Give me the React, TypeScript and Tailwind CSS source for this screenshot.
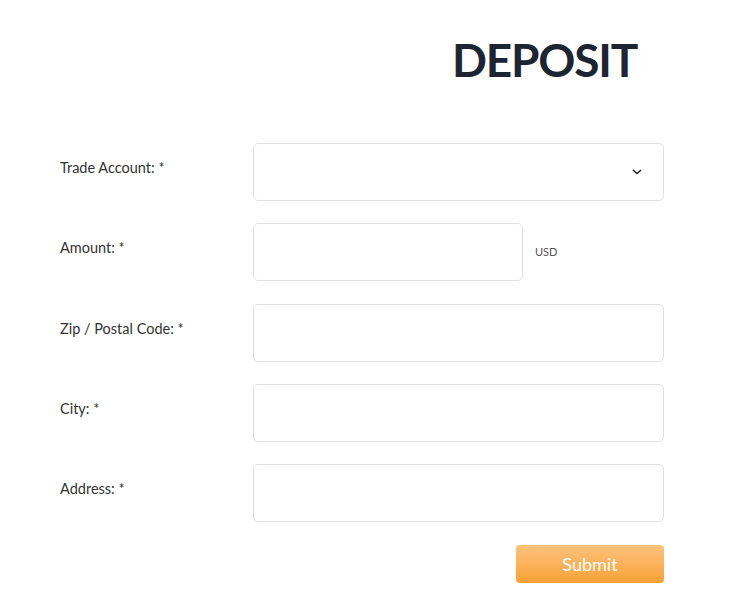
const fields = [
  { label: "Trade Account: *", kind: "select" },
  { label: "Amount: *", kind: "amount" },
  { label: "Zip / Postal Code: *", kind: "text" },
  { label: "City: *", kind: "text" },
  { label: "Address: *", kind: "text" },
];

function Chevron() {
  return (
    <svg width="10" height="6" viewBox="0 0 10 6" fill="none">
      <path d="M1 1l4 3.5L9 1" stroke="#222" strokeWidth="1.6" />
    </svg>
  );
}

export default function App() {
  return (
    <div className="min-h-[614px] w-[754px] bg-white font-['Lato',sans-serif] text-[#333]">
      <div className="pl-[452px] pt-[33px]">
        <h1 className="text-[46px] font-bold leading-[54px] tracking-[-1.2px] text-[#1d2532]">DEPOSIT</h1>
      </div>

      <form className="mt-[56px] flex w-[664px] flex-col gap-[22.3px] pl-[60px]">
        {fields.map((f) => (
          <div key={f.label} className="flex">
            <label className="w-[193px] pt-[15px] text-[14.5px] leading-[20px] text-[#333]">{f.label}</label>
            {f.kind === "select" && (
              <div className="flex h-[58px] w-[411px] items-center justify-end rounded-[5px] border border-[#e0e0e0] pr-[21px]">
                <Chevron />
              </div>
            )}
            {f.kind === "amount" && (
              <div className="flex items-center">
                <div className="h-[58px] w-[270px] rounded-[5px] border border-[#e0e0e0]" />
                <span className="ml-[12px] text-[11px] text-[#555]">USD</span>
              </div>
            )}
            {f.kind === "text" && (
              <div className="h-[58px] w-[411px] rounded-[5px] border border-[#e0e0e0]" />
            )}
          </div>
        ))}
        <div className="mt-[1px] flex justify-end">
          <button
            type="button"
            className="h-[38px] w-[148px] rounded-[4px] bg-gradient-to-b from-[#fdc27a] to-[#f8a132] text-[18px] text-white"
          >
            Submit
          </button>
        </div>
      </form>
    </div>
  );
}
